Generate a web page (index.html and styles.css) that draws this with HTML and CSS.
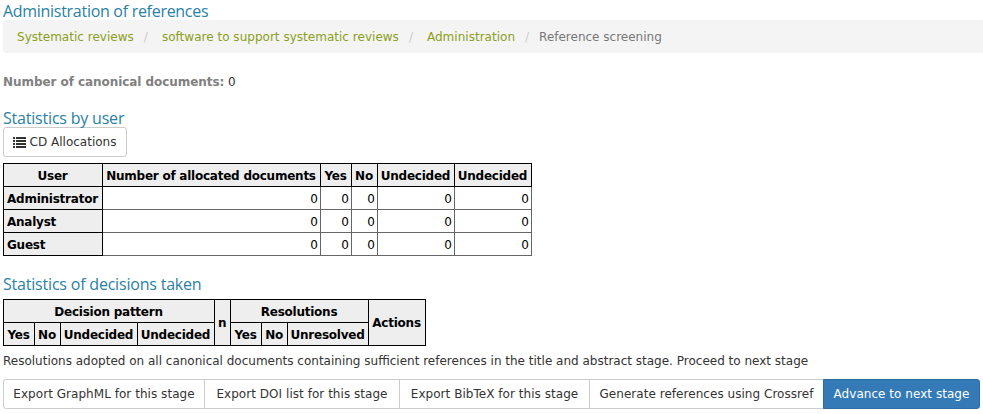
FILE: index.html
```html
<!DOCTYPE html>
<html lang="en">
<head>
<meta charset="utf-8">
<title>Administration of references</title>
<link rel="stylesheet" href="styles.css">
</head>
<body>
<main class="page">
  <h1 class="heading main-title">Administration of references</h1>
  <ol class="breadcrumb">
    <li><a>Systematic reviews</a></li>
    <li><a>software to support systematic reviews</a></li>
    <li><a>Administration</a></li>
    <li class="current">Reference screening</li>
  </ol>
  <p class="count"><b>Number of canonical documents:</b> <span>0</span></p>
  <h2 class="heading">Statistics by user</h2>
  <a class="btn btn-list"><svg class="icon" viewBox="0 0 13 11" width="13" height="11" shape-rendering="crispEdges"><path d="M0 0h2v2H0zM3 0h10v2H3zM0 3h2v2H0zM3 3h10v2H3zM0 6h2v2H0zM3 6h10v2H3zM0 9h2v2H0zM3 9h10v2H3z"/></svg><span>CD Allocations</span></a>
  <table class="users">
    <colgroup><col class="c99"><col class="c218"><col class="c31"><col class="c26"><col class="c77"><col class="c77"></colgroup>
    <tr><th>User</th><th>Number of allocated documents</th><th>Yes</th><th>No</th><th>Undecided</th><th>Undecided</th></tr>
    <tr><th class="name">Administrator</th><td>0</td><td>0</td><td>0</td><td>0</td><td>0</td></tr>
    <tr><th class="name">Analyst</th><td>0</td><td>0</td><td>0</td><td>0</td><td>0</td></tr>
    <tr><th class="name">Guest</th><td>0</td><td>0</td><td>0</td><td>0</td><td>0</td></tr>
  </table>
  <h2 class="heading decisions-title">Statistics of decisions taken</h2>
  <table class="decisions">
    <colgroup><col class="c31"><col class="c26"><col class="c77"><col class="c77"><col class="c16"><col class="c31"><col class="c26"><col class="c81"><col class="c57"></colgroup>
    <tr><th colspan="4">Decision pattern</th><th rowspan="2">n</th><th colspan="3">Resolutions</th><th rowspan="2">Actions</th></tr>
    <tr><th>Yes</th><th>No</th><th>Undecided</th><th>Undecided</th><th>Yes</th><th>No</th><th>Unresolved</th></tr>
  </table>
  <p class="note">Resolutions adopted on all canonical documents containing sufficient references in the title and abstract stage. Proceed to next stage</p>
  <div class="group">
    <a class="btn g1">Export GraphML for this stage</a>
    <a class="btn g2">Export DOI list for this stage</a>
    <a class="btn g3">Export BibTeX for this stage</a>
    <a class="btn g4">Generate references using Crossref</a>
    <a class="btn primary g5">Advance to next stage</a>
  </div>
</main>
</body>
</html>
```
FILE: styles.css
```css
* { box-sizing: border-box; }
body {
  margin: 0;
  background: #fff;
  color: #333;
  font: 12px/17px Verdana, "DejaVu Sans", sans-serif;
  overflow: hidden;
}
.page { padding: 3px 0 0 3px; white-space: nowrap; }
.heading {
  margin: 0;
  height: 17px;
  font: 400 16px/17px "Trebuchet MS", "Open Sans", sans-serif;
  letter-spacing: -0.2px;
  color: #2a7fa5;
}
.main-title { letter-spacing: -0.29px; }
.breadcrumb {
  display: flex;
  height: 33px;
  margin: 0;
  padding: 9px 14px 7px;
  list-style: none;
  background: #f4f4f4;
  border-radius: 4px 0 0 4px;
  color: #777;
}
.breadcrumb a { color: #8a9f1b; letter-spacing: 0.02px; }
.breadcrumb li + li::before { content: "/"; color: #ccc; padding: 0 14px 0 10px; }
.breadcrumb li.current::before { padding-right: 10px; }
.count { margin: 21px 0 19px; height: 17px; }
.count b { color: #808080; letter-spacing: -0.06px; }
.btn {
  display: flex;
  align-items: center;
  justify-content: center;
  height: 30px;
  border: 1px solid #ccc;
  border-radius: 3px;
  background: #fff;
}
.btn-list { width: 124px; gap: 4px; margin-bottom: 6px; padding-right: 1px; }
.icon { fill: #333; }
table { border-collapse: collapse; table-layout: fixed; color: #000; }
.users { width: 529px; }
.decisions { width: 423px; }
tr { height: 23px; }
th, td { line-height: 17px; height: 23px; }
th {
  border: 1px solid #000;
  background: #eee;
  text-align: center;
  letter-spacing: -0.24px;
  padding: 2px 1px 0 0;
}
th.name { text-align: left; padding-left: 3px; }
td { border: 1px solid #666; text-align: right; padding: 2px 2px 0; }
.c99 { width: 99px; }
.c218 { width: 218px; }
.c31 { width: 31px; }
.c26 { width: 26px; }
.c77 { width: 77px; }
.c16 { width: 16px; }
.c81 { width: 81px; }
.c57 { width: 57px; }
.decisions-title { margin: 20px 0 6px; }
.note { margin: 7px 0 9px; height: 17px; }
.group { display: flex; }
.group .btn { border-radius: 0; margin-right: -1px; letter-spacing: 0.04px; }
.group .g1 { width: 202px; border-radius: 3px 0 0 3px; }
.group .g2 { width: 196px; }
.group .g3 { width: 191px; }
.group .g4 { width: 235px; }
.group .g5 { width: 157px; border-radius: 0 3px 3px 0; }
.group .primary { background: #337ab7; border-color: #2e6da4; color: #fff; z-index: 1; }
```
